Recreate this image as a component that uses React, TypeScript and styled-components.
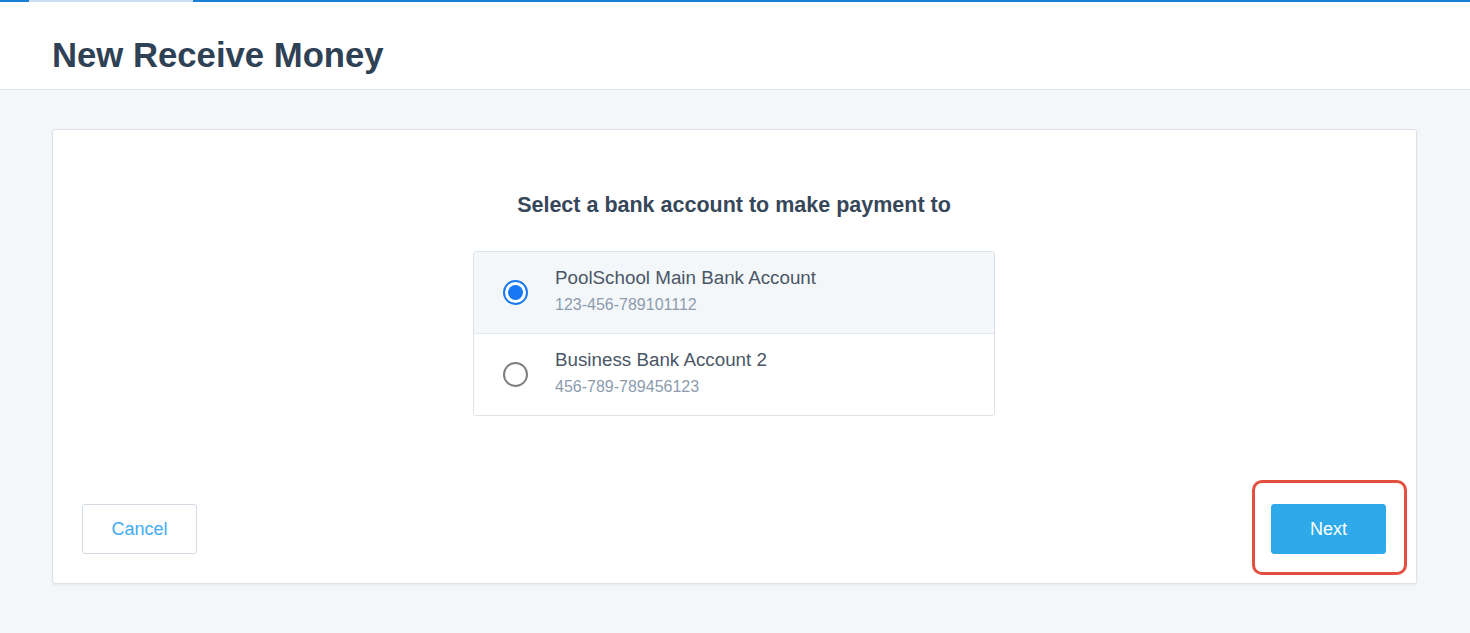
import React, { useState } from "react";
import styled, { createGlobalStyle } from "styled-components";

const GlobalStyle = createGlobalStyle`
  html, body {
    margin: 0;
    padding: 0;
    background: #f4f7fa;
    font-family: "Liberation Sans", Arial, sans-serif;
  }
`;

const Page = styled.div`
  min-height: 633px;
  background: #f4f7fa;
`;

const TopBar = styled.div`
  display: flex;
  height: 2px;
  background: #1a7fd6;
`;

const TopTab = styled.div`
  margin-left: 29px;
  width: 164px;
  background: #c9def3;
`;

const Header = styled.header`
  height: 88px;
  background: #ffffff;
  border-bottom: 1px solid #dde3ea;
  display: flex;
  align-items: center;
  padding: 0 52px;
  box-sizing: border-box;
`;

const Title = styled.h1`
  margin: 0;
  padding-top: 20px;
  font-size: 34.7px;
  font-weight: 700;
  color: #2f4154;
`;

const Body = styled.main`
  padding: 39px 53px 0 52px;
`;

const Card = styled.section`
  position: relative;
  background: #ffffff;
  border: 1px solid #dde2e8;
  border-radius: 3px;
  box-shadow: 0 1px 2px rgba(40, 60, 80, 0.08);
  padding: 63px 30px 29px 29px;
  display: flex;
  flex-direction: column;
  align-items: center;
`;

const Question = styled.h2`
  margin: 0 0 33px;
  font-size: 21.5px;
  font-weight: 700;
  color: #36475a;
`;

const AccountList = styled.div`
  width: 522px;
  box-sizing: border-box;
  border: 1px solid #dde2e8;
  border-radius: 3px;
  overflow: hidden;
`;

const AccountRow = styled.label<{ $selected: boolean }>`
  display: flex;
  align-items: center;
  height: 81px;
  padding: 0 29px;
  gap: 27px;
  cursor: pointer;
  background: ${(p) => (p.$selected ? "#f4f7fa" : "#ffffff")};
  & + & {
    border-top: 1px solid #e4e9ee;
  }
`;

const Radio = styled.span<{ $checked: boolean }>`
  width: 25px;
  height: 25px;
  box-sizing: border-box;
  border-radius: 50%;
  border: 2px solid ${(p) => (p.$checked ? "#1877f2" : "#7f7f7f")};
  background: #ffffff;
  display: flex;
  align-items: center;
  justify-content: center;
  flex-shrink: 0;
  &::after {
    content: "";
    width: 15px;
    height: 15px;
    border-radius: 50%;
    background: ${(p) => (p.$checked ? "#1877f2" : "transparent")};
  }
`;

const AccountInfo = styled.div`
  display: flex;
  flex-direction: column;
  gap: 7px;
  margin-top: -5px;
`;

const AccountName = styled.span`
  font-size: 18.8px;
  color: #4a5666;
`;

const AccountNumber = styled.span`
  font-size: 16px;
  color: #8c9bad;
`;

const Footer = styled.div`
  align-self: stretch;
  display: flex;
  justify-content: space-between;
  margin-top: 88px;
`;

const Button = styled.button<{ $primary?: boolean }>`
  width: 115px;
  height: 50px;
  border-radius: 3px;
  font-family: "Liberation Sans", Arial, sans-serif;
  font-size: 18px;
  cursor: pointer;
  border: 1px solid ${(p) => (p.$primary ? "#2eaaeb" : "#d3dce5")};
  background: ${(p) => (p.$primary ? "#2eaaeb" : "#ffffff")};
  color: ${(p) => (p.$primary ? "#ffffff" : "#42abf2")};
`;

const Highlight = styled.div`
  position: relative;
`;

const HighlightRing = styled.span`
  position: absolute;
  left: -19px;
  right: -21px;
  top: -24px;
  bottom: -21px;
  border: 3px solid #e2503f;
  border-radius: 10px;
  pointer-events: none;
`;

const accounts = [
  { id: "main", name: "PoolSchool Main Bank Account", number: "123-456-789101112" },
  { id: "biz2", name: "Business Bank Account 2", number: "456-789-789456123" },
];

export default function App() {
  const [selected, setSelected] = useState("main");
  return (
    <Page>
      <GlobalStyle />
      <TopBar>
        <TopTab />
      </TopBar>
      <Header>
        <Title>New Receive Money</Title>
      </Header>
      <Body>
        <Card>
          <Question>Select a bank account to make payment to</Question>
          <AccountList>
            {accounts.map((a) => (
              <AccountRow
                key={a.id}
                $selected={selected === a.id}
                onClick={() => setSelected(a.id)}
              >
                <Radio $checked={selected === a.id} />
                <AccountInfo>
                  <AccountName>{a.name}</AccountName>
                  <AccountNumber>{a.number}</AccountNumber>
                </AccountInfo>
              </AccountRow>
            ))}
          </AccountList>
          <Footer>
            <Button>Cancel</Button>
            <Highlight>
              <Button $primary>Next</Button>
              <HighlightRing />
            </Highlight>
          </Footer>
        </Card>
      </Body>
    </Page>
  );
}
